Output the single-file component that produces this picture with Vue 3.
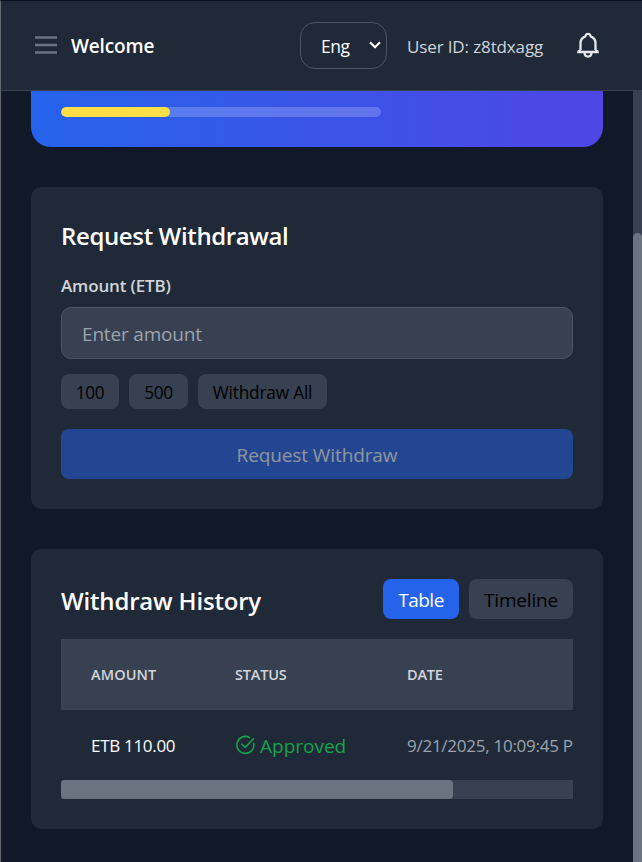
<script setup>
const chips = ['100', '500', 'Withdraw All']
const columns = ['Amount', 'Status', 'Date']
const progress = 34
</script>

<template>
  <div class="screen">
    <header class="header">
      <svg class="menu" viewBox="0 0 22 19" fill="none" stroke="#6b7280" stroke-width="2.4">
        <path d="M0 1.5H22M0 9H22M0 16.5H22" />
      </svg>
      <h1 class="welcome">Welcome</h1>
      <div class="language">
        <span class="eng">Eng</span>
        <svg class="chevron" viewBox="0 0 12 8" fill="none" stroke="#fff" stroke-width="2.1">
          <path d="M1 1.2L6 6.2L11 1.2" />
        </svg>
      </div>
      <span class="user">User ID: z8tdxagg</span>
      <svg class="bell" viewBox="0 0 24 28" fill="none" stroke="#e5e7eb" stroke-width="2.3" stroke-linejoin="round">
        <path d="M1.2 20H22.8M2.6 19.8L4.5 17.4V11.4C4.5 7.9 6.4 5.3 9.4 4.3C9.7 2.7 10.6 1.9 12 1.9S14.3 2.7 14.6 4.3C17.6 5.3 19.5 7.9 19.5 11.4V17.4L21.4 19.8" />
        <path d="M8.4 20.5C8.6 23.2 10 24.6 12 24.6S15.4 23.2 15.6 20.5" />
      </svg>
    </header>

    <div class="body">
      <main class="content">
        <section class="balance">
          <div class="progress"><div class="bar" :style="{ width: progress + '%' }"></div></div>
        </section>

        <section class="card request">
          <h2 class="title request-title">Request Withdrawal</h2>
          <label class="label"><span>Amount (ETB)</span></label>
          <div class="input"><span>Enter amount</span></div>
          <div class="chips">
            <button v-for="(chip, i) in chips" :key="chip" class="chip" :class="'chip-' + i">{{ chip }}</button>
          </div>
          <button class="submit"><span>Request Withdraw</span></button>
        </section>

        <section class="card history">
          <div class="history-head">
            <h2 class="title history-title">Withdraw History</h2>
            <button class="tab active">Table</button>
            <button class="tab timeline">Timeline</button>
          </div>
          <div class="table">
            <div class="row head">
              <span v-for="column in columns" :key="column" :class="'h-' + column.toLowerCase()">{{ column }}</span>
            </div>
            <div class="row data">
              <span class="amount">ETB 110.00</span>
              <span class="status">
                <svg class="check" viewBox="0 0 20 20" fill="none" stroke="#16a34a" stroke-width="1.6" stroke-linecap="round" stroke-linejoin="round">
                  <path d="M18.2 8.2A8.5 8.5 0 1 1 14.2 2.6" />
                  <path d="M6.2 9L9.8 12.4L18 3.8" />
                </svg>
                <span class="approved">Approved</span>
              </span>
              <span class="date">9/21/2025, 10:09:45 P</span>
            </div>
            <div class="scroll-x"><div class="thumb-x"></div></div>
          </div>
        </section>
      </main>
      <div class="scroll-y"><div class="thumb-y"></div></div>
    </div>
  </div>
</template>

<style>
body {
  margin: 0;
  background: #111827;
}
</style>

<style scoped>
.screen {
  box-sizing: border-box;
  width: 642px;
  height: 862px;
  overflow: hidden;
  display: flex;
  flex-direction: column;
  border-top: 1px solid #06101f;
  border-left: 1px solid #65686c;
  background: #111827;
  color: #fff;
  font-family: "Open Sans", "Noto Sans", sans-serif;
  white-space: nowrap;
}
.screen * { box-sizing: border-box; }
h1, h2 { margin: 0; font-weight: 600; }
button { border: 0; padding: 0; font-family: inherit; }
.header {
  display: flex;
  align-items: center;
  flex: none;
  height: 90px;
  padding-left: 34px;
  background: #1f2937;
  border-bottom: 1px solid #374151;
}
.menu { width: 22px; height: 19px; flex: none; }
.welcome {
  width: 229px;
  margin-left: 14px;
  font-size: 19px;
  font-weight: 650;
  letter-spacing: -0.15px;
}
.language {
  display: flex;
  align-items: center;
  justify-content: space-between;
  width: 87px;
  height: 47px;
  padding: 0 5px 0 20px;
  border: 1px solid #4b5563;
  border-radius: 15px;
}
.eng { font-size: 17.5px; letter-spacing: -0.5px; }
.chevron { width: 12px; height: 8px; margin-bottom: 1px; }
.user {
  width: 136px;
  margin-left: 20px;
  padding-top: 1px;
  font-size: 17px;
  letter-spacing: -0.13px;
  color: #d1d5db;
}
.bell { width: 24px; height: 28px; margin-left: 33px; }
.body { display: flex; flex: 1; min-height: 0; }
.content { width: 632px; padding: 0 30px; }
.balance {
  height: 56px;
  padding: 16px 30px;
  border-radius: 0 0 20px 20px;
  background: linear-gradient(90deg, #2563eb, #4f46e5);
}
.progress {
  width: 320px;
  height: 10px;
  border-radius: 5px;
  overflow: hidden;
  background: rgba(255, 255, 255, 0.2);
}
.bar { height: 10px; border-radius: 5px; background: #fde047; }
.card {
  margin-top: 40px;
  padding: 30px;
  border-radius: 10px;
  background: #1f2937;
}
.request { height: 322px; }
.title { font-size: 24px; line-height: 38px; }
.request-title { letter-spacing: -0.37px; }
.label {
  display: block;
  height: 25px;
  margin-top: 18px;
  font-size: 17px;
  font-weight: 600;
  line-height: 25px;
  letter-spacing: -0.15px;
  color: #d1d5db;
}
.input {
  height: 52px;
  margin-top: 9px;
  padding-left: 20px;
  border: 1px solid #4b5563;
  border-radius: 10px;
  background: #374151;
  color: #9ca3af;
  font-size: 19px;
  line-height: 52px;
  letter-spacing: -0.18px;
}
.chips { display: flex; gap: 10px; margin-top: 15px; }
.chip {
  height: 35px;
  border-radius: 8px;
  background: #374151;
  color: #000;
  font-size: 17.3px;
  line-height: 37px;
  letter-spacing: -0.4px;
}
.chip-0 { width: 58px; }
.chip-1 { width: 59px; }
.chip-2 { width: 129px; letter-spacing: -0.2px; }
.submit {
  width: 100%;
  height: 50px;
  margin-top: 20px;
  border-radius: 8px;
  background: #2563eb;
  color: #fff;
  font-size: 19px;
  line-height: 52px;
  letter-spacing: -0.1px;
  opacity: 0.5;
}
.history { height: 280px; }
.history-head { display: flex; height: 40px; gap: 10px; }
.history-title { flex: 1; line-height: 44px; letter-spacing: -0.18px; }
.tab {
  height: 40px;
  border-radius: 8px;
  background: #374151;
  color: #000;
  font-size: 19px;
  line-height: 42px;
  letter-spacing: -0.2px;
}
.active { width: 76px; background: #2563eb; color: #fff; letter-spacing: -0.5px; }
.timeline { width: 104px; }
.table { margin-top: 20px; overflow: hidden; }
.row {
  display: grid;
  grid-template-columns: 144px 172px 166px;
  align-items: center;
  padding-left: 30px;
}
.head {
  height: 71px;
  background: #374151;
  color: #d1d5db;
  font-size: 14.5px;
  font-weight: 600;
  text-transform: uppercase;
}
.h-amount { letter-spacing: 0.1px; }
.h-status, .h-date { letter-spacing: -0.2px; }
.data { height: 70px; padding-top: 1px; font-size: 17px; }
.amount { letter-spacing: -0.3px; }
.status { display: flex; align-items: center; gap: 4px; color: #16a34a; }
.check { width: 21px; height: 20px; margin-bottom: 2px; }
.approved { font-size: 19px; }
.date { color: #9ca3af; letter-spacing: -0.26px; }
.scroll-x { height: 19px; background: #374151; }
.thumb-x { width: 392px; height: 19px; border-radius: 4px; background: #6b7280; }
.scroll-y { width: 9px; padding-top: 142px; background: #374151; }
.thumb-y { height: 640px; border-radius: 5px 5px 0 0; background: #6b7280; }
</style>
